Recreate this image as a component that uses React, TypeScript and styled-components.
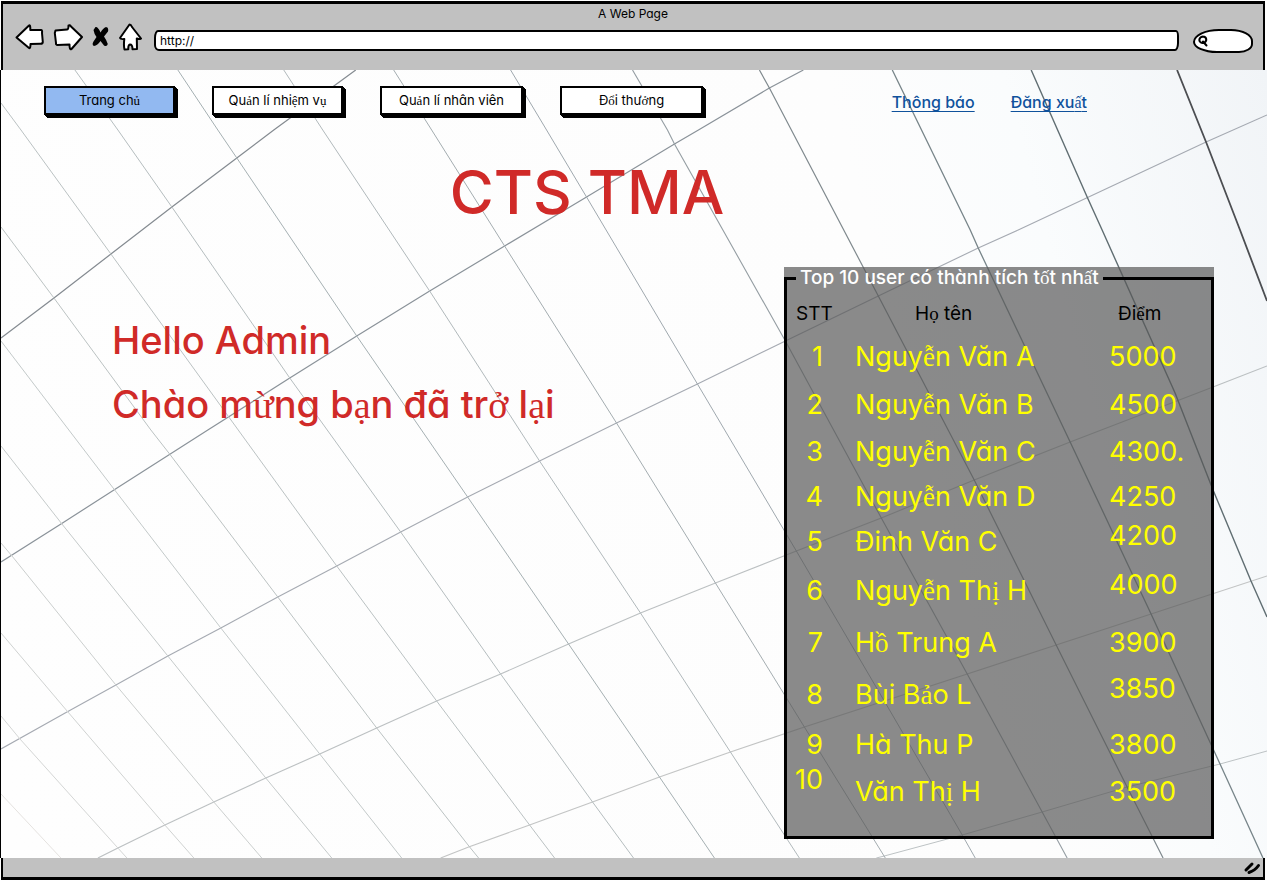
import React from "react";
import styled, { createGlobalStyle } from "styled-components";

const GlobalStyle = createGlobalStyle`
  *, *::before, *::after { box-sizing: border-box; }
  body {
    margin: 0;
    background: #fff;
    color: #000;
    font-family: Inter, "Liberation Sans", sans-serif;
    font-feature-settings: "cv11", "ss03";
  }
  button, input { font: inherit; font-feature-settings: inherit; color: inherit; }
`;

const Browser = styled.div`
  min-height: 100vh;
  display: flex;
  flex-direction: column;
  padding: 1px 0 1px 1px;
`;

const Chrome = styled.header`
  height: 69px;
  margin-right: 2px;
  border: solid #000;
  border-width: 3px 2px 0 2px;
  background: #c1c1c1;
`;

const WindowTitle = styled.div`
  height: 18px;
  font-size: 12px;
  line-height: 19px;
  text-align: center;
`;

const Toolbar = styled.div`
  display: flex;
  align-items: center;
  gap: 9px;
  height: 32px;
  padding: 0 10px 0 12px;
`;

const IconButton = styled.button`
  display: flex;
  padding: 0 0 2px;
  border: 0;
  background: none;
  cursor: pointer;
`;

const Address = styled.input`
  flex: 1;
  min-width: 0;
  height: 21px;
  margin: 5px 0 0 2px;
  padding: 0 4px;
  border: 2px solid #000;
  border-radius: 4px 3px 4px 5px / 8px 6px 8px 6px;
  background: #fff;
  font-size: 12px;
  outline: none;
`;

const SearchBox = styled.label`
  display: flex;
  align-items: center;
  width: 60px;
  height: 24px;
  margin: 5px 0 0 5px;
  padding-left: 2px;
  border: 2px solid #000;
  border-radius: 26px 22px 14px 24px / 13px 12px 9px 11px;
  background: #fff;
`;

const SearchInput = styled.input`
  width: 36px;
  height: 16px;
  padding: 0;
  border: 0;
  background: transparent;
  font-size: 12px;
  outline: none;
`;

const Page = styled.main`
  position: relative;
  flex: 1;
  padding-bottom: 19px;
  border-left: 1px solid #000;
  margin-left: -1px;
  background: linear-gradient(75deg, #fefefe 0%, #fdfdfd 70%, #fafcfd 82%, #f1f4f7 100%);
`;

const Backdrop = styled.svg`
  position: absolute;
  inset: 0;
  width: 100%;
  height: 100%;
  opacity: 0.88;
`;

const Content = styled.div`
  position: relative;
`;

const Nav = styled.nav`
  display: flex;
  align-items: center;
  gap: 37px;
  padding: 16px 180px 0 43px;
`;

const NavButton = styled.button<{ $width: number; $active?: boolean }>`
  width: ${(p) => p.$width}px;
  height: 29px;
  margin-bottom: 3px;
  padding: 0;
  border: 2px solid #000;
  background: ${(p) => (p.$active ? "#92b9f1" : "#fff")};
  box-shadow: 1px 1px 0 #000, 2px 2px 0 #000, 3px 3px 0 #000;
  font-size: 13px;
  white-space: nowrap;
  cursor: pointer;
`;

const NavLinks = styled.div`
  display: flex;
  gap: 36px;
  margin-left: auto;
`;

const NavLink = styled.a`
  color: #10529c;
  font-size: 16px;
  font-weight: 500;
  line-height: 24px;
  text-decoration: underline;
  text-decoration-thickness: 1px;
  text-underline-offset: 3px;
  text-decoration-skip-ink: none;
  white-space: nowrap;
`;

const Title = styled.h1`
  margin: 38px 94px 0 0;
  color: #d02a28;
  font-size: 60px;
  font-weight: 500;
  line-height: 72px;
  text-align: center;
`;

const Columns = styled.div`
  display: flex;
  justify-content: space-between;
  align-items: flex-start;
  margin-top: 39px;
  padding: 0 53px 0 111px;
`;

const Greeting = styled.section`
  display: flex;
  flex-direction: column;
  gap: 20px;
  padding-top: 51px;
`;

const GreetingLine = styled.p`
  margin: 0;
  color: #d02a28;
  font-size: 38px;
  font-weight: 500;
  line-height: 44px;
`;

const Panel = styled.section`
  width: 430px;
  background: rgba(88, 88, 88, 0.7);
`;

const Board = styled.fieldset`
  min-width: 0;
  margin: 0;
  padding: 0 0 21px;
  border: 3px solid #000;
`;

const BoardTitle = styled.legend`
  margin-left: 9px;
  padding: 0 4px;
  color: #fff;
  font-size: 19px;
  font-weight: 500;
  line-height: 22px;
  white-space: nowrap;
`;

const Ranking = styled.table`
  width: 100%;
  border-collapse: collapse;
  table-layout: fixed;
`;

const Heading = styled.th<{ $width?: number; $indent: number }>`
  width: ${(p) => (p.$width ? `${p.$width}px` : "auto")};
  height: 44px;
  padding: 13px 0 0 ${(p) => p.$indent}px;
  font-size: 19px;
  font-weight: 400;
  line-height: 24px;
  text-align: left;
  vertical-align: top;
`;

const Row = styled.tr<{ $height: number }>`
  height: ${(p) => p.$height}px;
`;

const Cell = styled.td<{ $rank?: boolean; $raise?: number }>`
  padding: 0 ${(p) => (p.$rank ? 32 : 0)}px ${(p) => p.$raise ?? 0}px 0;
  color: #ff0;
  font-size: 27px;
  line-height: 22px;
  text-align: ${(p) => (p.$rank ? "right" : "left")};
  vertical-align: middle;
  white-space: nowrap;
`;

const StatusBar = styled.footer`
  display: flex;
  justify-content: flex-end;
  align-items: center;
  height: 22px;
  margin-right: 2px;
  padding-right: 2px;
  border: solid #000;
  border-width: 0 2px 3px 2px;
  background: #c1c1c1;
`;

const Serif = styled.span`
  font-family: "Liberation Serif", serif;
  font-weight: 400;
`;

/* Toned Vietnamese vowels are set in the serif face. */
const Viet = ({ children }: { children: string }) => (
  <>
    {children
      .split(/([\u1EA0-\u1EF9]+)/)
      .map((part, i) => (i % 2 ? <Serif key={i}>{part}</Serif> : part))}
  </>
);

const icon = { fill: "#fff", stroke: "#000", strokeWidth: 2, strokeLinejoin: "round" as const, strokeLinecap: "round" as const };

const BackIcon = () => (
  <svg width="29" height="28" viewBox="15 23 29 28" {...icon}>
    <path d="M16.5 37.5 L29 25.5 Q30.5 24.5 30.3 30 L41 30 Q42.500 30 42 33 L42.800 42 Q42.500 44 40 43.700 L30.500 44 Q30.500 49 29 48 Z" />
  </svg>
);

const ForwardIcon = () => (
  <svg width="30" height="28" viewBox="52 23 30 28" {...icon}>
    <path d="M54.500 30.500 L66 29.500 Q67.500 29.500 67.500 25.500 Q68.500 24.500 70 26.500 L81 37 L70.500 49 Q68.500 50.500 68.500 44.500 L56.500 45 Q54.800 45 55 43 L53.800 33 Z" />
  </svg>
);

const StopIcon = () => (
  <svg width="18" height="28" viewBox="93 22 18 28" fill="#000">
    <path d="M96.500 26 Q99 25.500 101.500 31.500 Q104 27 107 26 Q110 26.500 109 30.500 L105 35.500 Q107.500 39 108.800 43 Q108 46 105 44.500 L101.500 40 Q98.500 44.500 95 45 Q92.500 44 94.500 40.500 L97.500 36 Q95 32.500 94.500 29 Z" />
  </svg>
);

const HomeIcon = () => (
  <svg width="24" height="28" viewBox="119 23 24 28" {...icon}>
    <path d="M129.500 24.500 Q131 24.500 132 27 L141 38.500 Q139 39.500 136.800 38.500 L137 49 L132.500 49.300 Q132.500 44.500 130 44.500 Q128 45 128.300 49.300 L124.500 49.500 Q123.500 46 124.300 39 Q120.500 39.500 120 38 Z" />
  </svg>
);

const MagnifierIcon = () => (
  <svg width="13" height="12" viewBox="0 0 13 12" fill="none" stroke="#000" strokeWidth="2" strokeLinecap="round">
    <path d="M6 1.500 Q9.300 1.500 9.300 5 Q8.500 8 5.500 8 Q2.500 7.500 2.300 5 Q2.500 2 6 1.500 M6 6.500 L9.500 10.500" />
  </svg>
);

const GripIcon = () => (
  <svg width="18" height="14" viewBox="0 0 18 14" fill="none" stroke="#000" strokeWidth="3" strokeLinecap="round">
    <path d="M3 9 L9 3 M6 11.500 Q12 9.500 15.500 4.500" />
  </svg>
);

/* Panel seams of the backdrop: [points, colour, width]. */
const seams: [string, string, number][] = [
  ["355,70 273,130 236,158 171,207 110,254 53,298 0,338", "#747b82", 1.2],
  ["803,70 769,88 698,130 674,144 586,197 504,246 429,291 356,336 289,378 207,430 113,490 60,524 0,562", "#7b848c", 1.2],
  ["1267,115 1206,142 1018,230 978,248 878,296 785,341 697,384 616,423 539,461 467,497 400,532 336,566 277,597 220,628 167,656 115,685 66,712 0,749", "#9a9fa8", 1.1],
  ["1267,366 1213,387 1070,442 974,480 881,518 796,551 715,583 640,613 568,644 500,674 436,701 376,728 319,754 265,778 213,802 164,825 117,848 97,858", "#b3b8ba", 1.1],
  ["1267,576 1151,614 1056,645 967,674 884,701 804,727 730,752 659,777 592,802 529,825 468,847 440,858", "#bbbdbd", 1.1],
  ["1267,751 1220,764 1127,787 1042,812 962,835 884,856 876,858", "#b5bbbd", 1],
  ["0,794 60,858", "#e2dfdc", 1],
  ["0,716 19,739 117,848 126,858", "#cfd1d0", 1],
  ["0,633 67,712 164,825 193,858", "#cacdcc", 1],
  ["0,543 11,556 115,685 213,802 261,858", "#c5c9c8", 1],
  ["0,446 61,524 167,656 265,778 331,858", "#bec4c4", 1],
  ["0,341 45,400 113,489 220,628 319,754 401,858", "#bcc3c3", 1],
  ["0,227 53,298 150,430 168,453 277,597 376,728 469,847 478,858", "#b3bbbb", 1],
  ["0,103 20,130 110,254 228,417 336,566 436,701 529,825 554,858", "#b2babb", 1],
  ["74,70 117,130 171,207 289,378 400,532 500,674 592,802 633,858", "#acb5b7", 1],
  ["177,70 217,130 236,158 356,336 467,497 568,644 659,777 714,858", "#9aa6a9", 1],
  ["283,70 322,130 429,291 539,461 640,613 730,752 799,858", "#a7b0b3", 1],
  ["393,70 431,130 504,246 616,423 715,583 804,727 885,858", "#98a2a6", 1],
  ["510,70 546,130 586,197 697,384 796,551 884,701 962,835 975,858", "#939da4", 1],
  ["632,70 667,130 674,144 785,341 881,518 967,674 1042,812 1067,858", "#879197", 1.1],
  ["759,70 769,88 791,130 878,296 974,480 1056,645 1127,787 1163,858", "#6f7a7f", 1.2],
  ["892,70 970,230 978,248 1070,442 1151,614 1220,764 1263,858", "#66757a", 1.3],
  ["1031,70 1087,197 1102,230 1175,393 1213,490 1251,581 1267,617", "#4c5b60", 1.4],
  ["1177,70 1206,142 1240,230 1267,301", "#35373b", 1.8],
];

type Entry = { rank: string; name: string; score: string; height: number; rankRaise?: number; scoreRaise?: number };

const entries: Entry[] = [
  { rank: "1", name: "Nguyễn Văn A", score: "5000", height: 48 },
  { rank: "2", name: "Nguyễn Văn B", score: "4500", height: 48 },
  { rank: "3", name: "Nguyễn Văn C", score: "4300.", height: 46 },
  { rank: "4", name: "Nguyễn Văn D", score: "4250", height: 44 },
  { rank: "5", name: "Đinh Văn C", score: "4200", height: 46, scoreRaise: 12 },
  { rank: "6", name: "Nguyễn Thị H", score: "4000", height: 52, scoreRaise: 12 },
  { rank: "7", name: "Hồ Trung A", score: "3900", height: 52 },
  { rank: "8", name: "Bùi Bảo L", score: "3850", height: 52, scoreRaise: 12 },
  { rank: "9", name: "Hà Thu P", score: "3800", height: 48 },
  { rank: "10", name: "Văn Thị H", score: "3500", height: 46, rankRaise: 24 },
];

export default function App() {
  return (
    <>
      <GlobalStyle />
      <Browser>
        <Chrome>
          <WindowTitle>A Web Page</WindowTitle>
          <Toolbar>
            <IconButton aria-label="Back"><BackIcon /></IconButton>
            <IconButton aria-label="Forward"><ForwardIcon /></IconButton>
            <IconButton aria-label="Stop"><StopIcon /></IconButton>
            <IconButton aria-label="Home"><HomeIcon /></IconButton>
            <Address aria-label="Address" defaultValue="http://" />
            <SearchBox>
              <MagnifierIcon />
              <SearchInput type="text" aria-label="Search" />
            </SearchBox>
          </Toolbar>
        </Chrome>

        <Page>
          <Backdrop viewBox="0 70 1267 788" preserveAspectRatio="none" fill="none" aria-hidden="true">
            {seams.map(([points, stroke, width]) => (
              <polyline key={points} points={points} stroke={stroke} strokeWidth={width} />
            ))}
          </Backdrop>
          <Content>
            <Nav>
              <NavButton $width={131} $active><Viet>Trang chủ</Viet></NavButton>
              <NavButton $width={131}><Viet>Quản lí nhiệm vụ</Viet></NavButton>
              <NavButton $width={143}><Viet>Quản lí nhân viên</Viet></NavButton>
              <NavButton $width={143}><Viet>Đổi thưởng</Viet></NavButton>
              <NavLinks>
                <NavLink href="#thong-bao">Thông báo</NavLink>
                <NavLink href="#dang-xuat"><Viet>Đăng xuất</Viet></NavLink>
              </NavLinks>
            </Nav>

            <Title>CTS TMA</Title>

            <Columns>
              <Greeting>
                <GreetingLine>Hello Admin</GreetingLine>
                <GreetingLine><Viet>Chào mừng bạn đã trở lại</Viet></GreetingLine>
              </Greeting>

              <Panel>
                <Board>
                  <BoardTitle><Viet>Top 10 user có thành tích tốt nhất</Viet></BoardTitle>
                  <Ranking>
                    <thead>
                      <tr>
                        <Heading scope="col" $width={68} $indent={9}>STT</Heading>
                        <Heading scope="col" $indent={60}><Viet>Họ tên</Viet></Heading>
                        <Heading scope="col" $width={102} $indent={9}><Viet>Điểm</Viet></Heading>
                      </tr>
                    </thead>
                    <tbody>
                      {entries.map((e) => (
                        <Row key={e.rank} $height={e.height}>
                          <Cell $rank $raise={e.rankRaise}>{e.rank}</Cell>
                          <Cell><Viet>{e.name}</Viet></Cell>
                          <Cell $raise={e.scoreRaise}>{e.score}</Cell>
                        </Row>
                      ))}
                    </tbody>
                  </Ranking>
                </Board>
              </Panel>
            </Columns>
          </Content>
        </Page>

        <StatusBar><GripIcon /></StatusBar>
      </Browser>
    </>
  );
}
